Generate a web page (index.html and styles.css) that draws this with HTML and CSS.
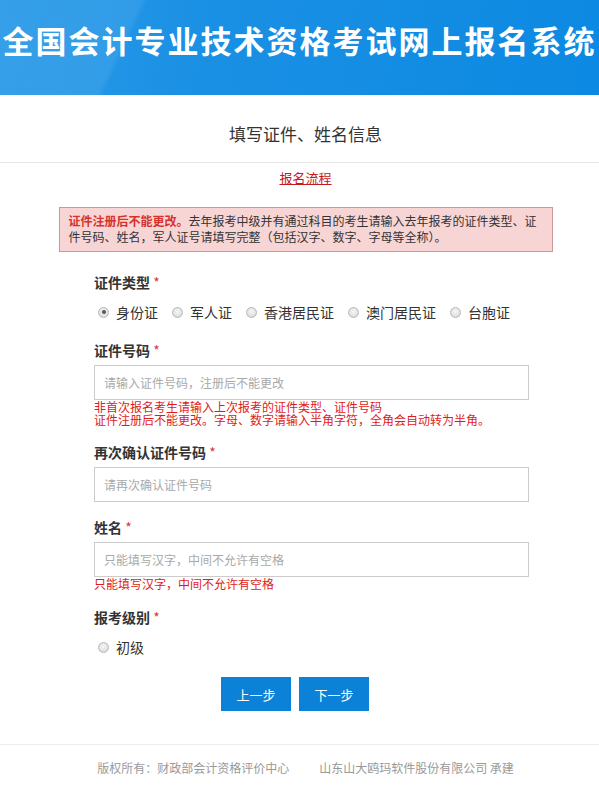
FILE: index.html
```html
<!DOCTYPE html>
<html lang="zh-CN">
<head>
<meta charset="utf-8">
<title>全国会计专业技术资格考试网上报名系统</title>
<link rel="stylesheet" href="styles.css">
</head>
<body>
<header class="banner">
  <div class="banner-title">全国会计专业技术资格考试网上报名系统</div>
</header>
<div class="page-head">
  <h2 class="page-title">填写证件、姓名信息</h2>
</div>
<main class="content">
  <div class="flow"><a class="flow-link" href="#">报名流程</a></div>
  <div class="alert">
    <strong class="alert-strong">证件注册后不能更改。</strong>去年报考中级并有通过科目的考生请输入去年报考的证件类型、证件号码、姓名，军人证号请填写完整（包括汉字、数字、字母等全称）。
  </div>
  <form class="form">
    <div class="label label-first">证件类型 <span class="req">*</span></div>
    <div class="radios">
      <label class="opt"><span class="radio checked"></span>身份证</label>
      <label class="opt"><span class="radio"></span>军人证</label>
      <label class="opt"><span class="radio"></span>香港居民证</label>
      <label class="opt"><span class="radio"></span>澳门居民证</label>
      <label class="opt"><span class="radio"></span>台胞证</label>
    </div>

    <div class="label">证件号码 <span class="req">*</span></div>
    <div class="input"><span class="ph">请输入证件号码，注册后不能更改</span></div>
    <div class="err">非首次报名考生请输入上次报考的证件类型、证件号码<br>证件注册后不能更改。字母、数字请输入半角字符，全角会自动转为半角。</div>

    <div class="label label-after-err">再次确认证件号码 <span class="req">*</span></div>
    <div class="input"><span class="ph">请再次确认证件号码</span></div>

    <div class="label label-after-input">姓名 <span class="req">*</span></div>
    <div class="input"><span class="ph">只能填写汉字，中间不允许有空格</span></div>
    <div class="err">只能填写汉字，中间不允许有空格</div>

    <div class="label label-after-err2">报考级别 <span class="req">*</span></div>
    <div class="radios">
      <label class="opt"><span class="radio"></span>初级</label>
    </div>

    <div class="buttons">
      <button type="button" class="btn">上一步</button>
      <button type="button" class="btn">下一步</button>
    </div>
  </form>
</main>
<footer class="footer">
  <span class="foot-item">版权所有：财政部会计资格评价中心</span>
  <span class="foot-item">山东山大鸥玛软件股份有限公司 承建</span>
</footer>
</body>
</html>
```

FILE: styles.css
```css
* { box-sizing: border-box; }

html, body {
  margin: 0;
  padding: 0;
  background: #ffffff;
}

body {
  width: 599px;
  font-family: "Noto Sans CJK SC", "Microsoft YaHei", sans-serif;
  color: #333;
  overflow: hidden;
}

.banner {
  height: 95px;
  display: flex;
  align-items: center;
  justify-content: center;
  padding-bottom: 16px;
  background:
    linear-gradient(115deg, rgba(255,255,255,0.05) 0%, rgba(255,255,255,0.08) 22%, rgba(255,255,255,0) 23%, rgba(255,255,255,0) 100%),
    linear-gradient(100deg, #2a9ae8 0%, #1a90e4 35%, #0c89e2 100%);
}

.banner-title {
  color: #fff;
  font-family: "Noto Sans CJK SC", sans-serif;
  font-size: 31px;
  font-weight: 700;
  letter-spacing: 2px;
  line-height: 40px;
  white-space: nowrap;
}

.page-head {
  padding: 29px 0 18px 12px;
  border-bottom: 1px solid #e6e6e6;
  text-align: center;
}

.page-title {
  margin: 0;
  font-size: 17px;
  font-weight: 400;
  line-height: 20px;
  color: #333;
}

.content {
  padding-left: 12px;
}

.flow {
  text-align: center;
  padding-top: 4px;
  line-height: 18px;
}

.flow-link {
  color: #c8161d;
  font-size: 13px;
  text-decoration: underline;
}

.alert {
  width: 494px;
  margin: 20px auto 0 auto;
  padding: 5px 8px 6px 9px;
  background: #f8d5d5;
  border: 1px solid #c99898;
  font-size: 12px;
  line-height: 16px;
  color: #333;
}

.alert-strong {
  color: #d6322c;
  font-weight: 700;
}

.form {
  width: 435px;
  margin-left: 82px;
}

.label {
  font-size: 14px;
  font-weight: 700;
  line-height: 20px;
  color: #333;
  margin-top: 18px;
  margin-bottom: 5px;
}

.label-first { margin-top: 20px; margin-bottom: 0; }
.label-after-err { margin-top: 16px; }
.label-after-err2 { margin-top: 17px; }
.label-after-input { margin-top: 15px; }

.req {
  color: #d23a3a;
  font-weight: 400;
}

.radios {
  display: flex;
  align-items: center;
  margin-top: 10px;
  padding-left: 4px;
  height: 20px;
}

.opt {
  display: flex;
  align-items: center;
  font-size: 14px;
  line-height: 20px;
  color: #333;
  margin-right: 14px;
}

.radio {
  width: 11px;
  height: 11px;
  border-radius: 50%;
  border: 1px solid #b9b9b9;
  background: radial-gradient(circle at 50% 40%, #f6f6f6 0%, #e2e2e2 60%, #cfcfcf 100%);
  margin-right: 7px;
  position: relative;
  flex: none;
}

.radio.checked::after {
  content: "";
  position: absolute;
  left: 2.5px;
  top: 2.5px;
  width: 4px;
  height: 4px;
  border-radius: 50%;
  background: #555;
}

.input {
  height: 35px;
  border: 1px solid #cccccc;
  background: #fff;
  display: flex;
  align-items: center;
  padding-left: 9px;
}

.ph {
  font-size: 12px;
  color: #a9a9a9;
}

.err {
  font-size: 12px;
  line-height: 13px;
  color: #e01b1b;
  margin-top: 0;
}

.buttons {
  display: flex;
  gap: 8px;
  margin-top: 20px;
  margin-left: 127px;
}

.btn {
  width: 70px;
  height: 34px;
  border: none;
  border-radius: 0;
  background: #0b82d8;
  color: #fff;
  font-family: "Noto Sans CJK SC", "Microsoft YaHei", sans-serif;
  font-size: 13px;
  padding: 0;
}

.footer {
  margin-top: 33px;
  border-top: 1px solid #ececec;
  display: flex;
  justify-content: center;
  gap: 30px;
  padding: 15px 0 0 12px;
  font-size: 12px;
  line-height: 16px;
  color: #999;
}
```
